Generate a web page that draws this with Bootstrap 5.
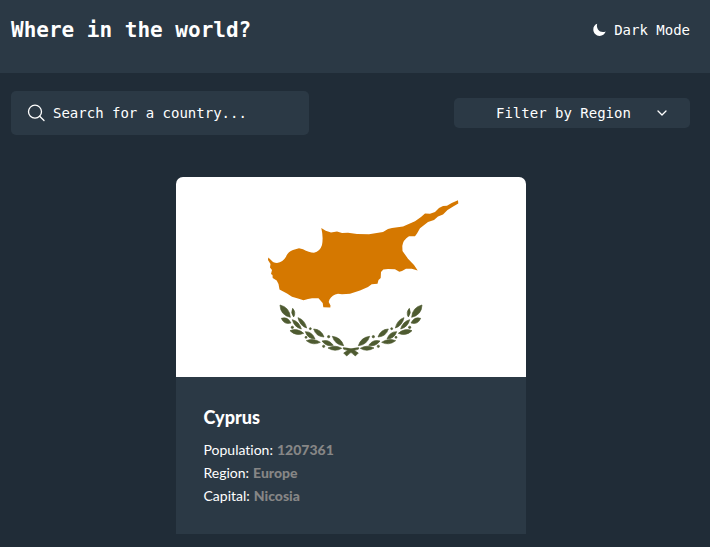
<!DOCTYPE html>
<html lang="en">
<head>
<meta charset="utf-8">
<meta name="viewport" content="width=device-width, initial-scale=1">
<title>Where in the world?</title>
<link href="https://cdn.jsdelivr.net/npm/bootstrap@5.3.0/dist/css/bootstrap.min.css" rel="stylesheet">
<style>
  body { background: #202c37; color: #fff; font-family: "DejaVu Sans Mono", monospace; font-size: 14px; }
  .gutters { padding-left: 11px; padding-right: 20px; }
  .site-header { background: #2b3945; padding-top: 16px; padding-bottom: 29px; }
  .site-title { font-size: 21px; line-height: 28px; font-weight: 700; }
  .theme-toggle { font-size: 14px; line-height: 28px; }
  .controls { padding-top: 18px; padding-bottom: 42px; }
  .search-box { background: #2b3945; width: 298px; height: 44px; padding: 0 16px; gap: 8px; border-radius: 5px; }
  .search-box input, .search-box input:focus { background: transparent; color: #fff; font-size: 14px; box-shadow: none; }
  .search-box input::placeholder { color: #fff; opacity: 1; }
  .region-select {
    width: 236px; height: 30px; padding: 0 40px 0 42px; border: 0; border-radius: 5px;
    color: #fff; font-size: 14px; background-color: #2b3945;
    background-image: url("data:image/svg+xml,%3Csvg xmlns='http://www.w3.org/2000/svg' viewBox='0 0 12 12'%3E%3Cpath d='M2 4l4 4 4-4' fill='none' stroke='white' stroke-width='1.3' stroke-linecap='round' stroke-linejoin='round'/%3E%3C/svg%3E");
    background-size: 12px 12px; background-position: right 22px center;
  }
  .country-card { background: #2b3945; color: #fff; width: 350px; border: 0; border-radius: 7px 7px 0 0; font-family: Lato, sans-serif; font-variant-ligatures: none; overflow: hidden; }
  .country-card .card-body { padding: 28px 28px 27px; }
  .country-card h2 { font-size: 18px; line-height: 24px; font-weight: 900; margin-bottom: 9px; }
  .country-card dl { line-height: 23px; }
  .country-card dt { font-weight: 400; }
  .country-card dd { font-weight: 900; color: #868686; }
</style>
</head>
<body>
<header class="site-header gutters d-flex justify-content-between align-items-center">
  <h1 class="site-title m-0">Where in the world?</h1>
  <button type="button" class="theme-toggle btn p-0 border-0 text-white d-flex align-items-center gap-2">
    <svg width="13" height="14" viewBox="0 0 13 14" fill="#fff" aria-hidden="true"><path d="M4.2.8C1.8 1.6.2 3.8.3 6.700c.1 3.300 2.900 6.200 6.300 6.200 2.800 0 5.200-1.700 6.100-4.300-3 1.100-6.200.4-7.700-2C3.900 4.700 3.600 2.600 4.200.8z"/></svg>
    <span>Dark Mode</span>
  </button>
</header>
<main class="gutters">
  <form class="controls d-flex flex-wrap justify-content-between align-items-center gap-3">
    <label class="search-box d-flex align-items-center">
      <svg class="flex-shrink-0" width="18" height="18" viewBox="0 0 18 18" fill="none" stroke="#fff" stroke-width="1.3" stroke-linecap="round" aria-hidden="true"><circle cx="8" cy="7.700" r="6.500"/><path d="M12.700 12.300l4.300 4.200"/></svg>
      <input type="search" class="form-control border-0 p-0" placeholder="Search for a country..." aria-label="Search for a country">
    </label>
    <select class="region-select form-select" aria-label="Filter by Region">
      <option selected>Filter by Region</option>
      <option>Africa</option>
      <option>Americas</option>
      <option>Asia</option>
      <option>Europe</option>
      <option>Oceania</option>
    </select>
  </form>
  <article class="country-card card mx-auto">
    <svg class="d-block w-100 bg-white" viewBox="176 177 350 200" role="img" aria-label="Flag of Cyprus">
      <path fill="#d57800" d="M268.300 257.500L271 260Q273 263 277 263Q283 262 286 256.700Q288 251.500 293 250L299 248.300L303 249.300Q309 252.700 314 252.700Q320 251.500 322 245Q323.500 237 321.300 228L325.700 230.700L331 232.500L337 231.600L342 233L348 232.800L357 234L369 234.200L383 232L388 229L392 228L403 226.500L415 221.300L421 217L425 213.500L430 213.800L435 212L439 208L443 206L447 205.800L451.700 203L458 200.300L458.300 203.500L454 206L447.500 210L443 214.500L438 216.500L434 220L428 222L420 228.300L417 233.500L415 236.300L409 236.300Q403 240 402.300 246L402.500 251L408 258.700L414 265L417.700 270.500L411.700 268.700L406 268.700L402 271L399.300 271.800L395 269.300L388 269L383.300 269.500L381 272L380.700 278L378.500 280L377.500 283.700L371.700 284.300L368 287L360 290.500L350 293.700L342 294.200L338 293.700Q332 295 329.500 299.500L328.700 302L330.500 305.500L330.300 307.500L323.300 307.300L322.700 303L318.500 298.300L312 298.200L308 299L303.500 300.300L298 298.500L292 296.700L287 293.500L279.500 289.500L278.500 284L276.700 280.500L272.700 278L272.500 275L271 274L272 270L270 267.500L270.500 264L268 260Z"/>
      <defs>
        <g id="branch" fill="#4e5b31" stroke="#4e5b31" stroke-width="2" stroke-linejoin="round">
          <path d="M30 30Q59 37 61 67Q31 60 30 30zM68 40Q79 52 71 66Q61 53 68 40zM34 70Q53 64 63 84Q42 90 34 70zM84 68Q105 75 110 99Q89 92 84 68zM67 74Q88 80 94 102Q72 96 67 74zM60 107Q82 98 101 115Q78 125 60 107zM131 102Q154 103 162 126Q138 125 131 102zM106 110Q127 110 135 132Q113 132 106 110zM109 137Q131 128 151 142Q129 153 109 137zM187 124Q213 127 221 152Q195 150 187 124zM156 138Q177 132 190 151Q169 156 156 138zM174 159Q195 148 215 160Q195 172 174 159z"/>
          <circle cx="67" cy="97" r="3.500"/><circle cx="121" cy="101" r="3"/><circle cx="108" cy="127" r="3"/><circle cx="176" cy="125" r="3.500"/><circle cx="161" cy="154" r="3.500"/>
          <path d="M220 158Q243 157 265 174L256 183Q242 167 220 162z"/>
        </g>
      </defs>
      <use href="#branch" transform="translate(270 295) scale(.3333)"/>
      <use href="#branch" transform="translate(432 295) scale(-.3333 .3333)"/>
    </svg>
    <div class="card-body">
      <h2>Cyprus</h2>
      <dl class="mb-0">
        <div class="d-flex gap-1"><dt>Population:</dt><dd class="m-0">1207361</dd></div>
        <div class="d-flex gap-1"><dt>Region:</dt><dd class="m-0">Europe</dd></div>
        <div class="d-flex gap-1"><dt>Capital:</dt><dd class="m-0">Nicosia</dd></div>
      </dl>
    </div>
  </article>
</main>
<script src="https://cdn.jsdelivr.net/npm/bootstrap@5.3.0/dist/js/bootstrap.bundle.min.js"></script>
</body>
</html>
